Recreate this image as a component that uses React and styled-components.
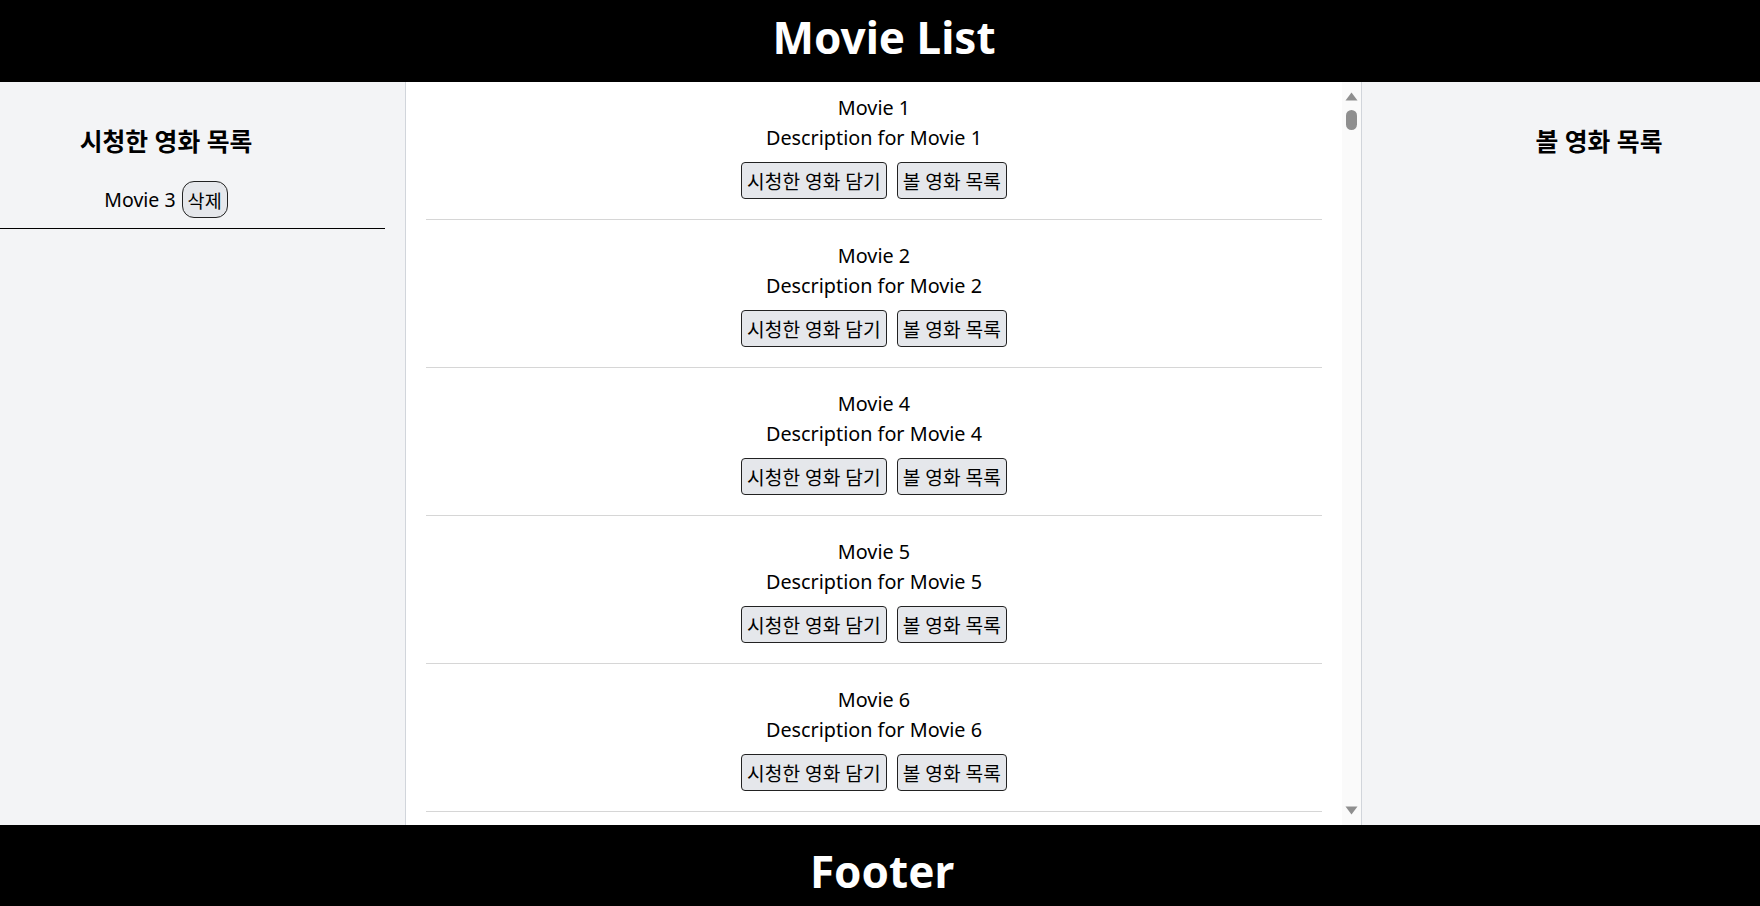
import { useState } from "react";
import styled, { createGlobalStyle } from "styled-components";

const GlobalStyle = createGlobalStyle`
  html, body {
    margin: 0;
    padding: 0;
    font-family: "Noto Sans", "Noto Sans CJK KR", sans-serif;
    color: #000;
    background: #fff;
  }
  * {
    box-sizing: border-box;
  }
`;

const Page = styled.div`
  display: flex;
  flex-direction: column;
  height: 100vh;
  overflow: hidden;
`;

const Header = styled.header`
  flex: 0 0 82px;
  background: #000;
  color: #fff;
  text-align: center;
  padding-bottom: 7px;
  padding-left: 8px;
`;

const Footer = styled.footer`
  flex: 0 0 81px;
  background: #000;
  color: #fff;
  text-align: center;
  padding-top: 11px;
  padding-left: 4px;
`;

const BigTitle = styled.h1`
  margin: 0;
  font-size: 44px;
  font-weight: 700;
  line-height: ${(props) => props.$lh || 75}px;
`;

const Main = styled.main`
  flex: 1;
  display: flex;
  min-height: 0;
`;

const Sidebar = styled.aside`
  flex: 0 0 ${(props) => props.$width}px;
  background: #f3f4f6;
  padding-top: 44px;
  ${(props) =>
    props.$side === "left"
      ? "border-right: 1px solid #d1d5db; padding-right: 20px;"
      : "border-left: 1px solid #d1d5db; padding-left: 76px;"}
`;

const SideTitle = styled.h2`
  margin: 0;
  font-size: 24.8px;
  font-weight: 700;
  line-height: 30px;
  text-align: center;
  padding-right: ${(props) => props.$inset || 0}px;
`;

const WatchedList = styled.ul`
  list-style: none;
  margin: 25px 0 0;
  padding: 0;
`;

const WatchedItem = styled.li`
  display: flex;
  align-items: center;
  justify-content: center;
  gap: 6px;
  padding: 0 53px 10px 0;
  border-bottom: 1px solid #000;
  font-size: 19.5px;
`;

const Middle = styled.div`
  flex: 1;
  display: flex;
  min-width: 0;
`;

const MovieScroller = styled.section`
  flex: 1;
  overflow-y: auto;
  padding: 0 20px;
  scrollbar-width: none;
  &::-webkit-scrollbar {
    display: none;
  }
`;

const Track = styled.div`
  flex: 0 0 19px;
  display: flex;
  flex-direction: column;
  align-items: center;
  background: #fafafa;
  padding: 10px 0 10px;
`;

const Thumb = styled.div`
  width: 11px;
  height: 20px;
  margin-top: 9px;
  border-radius: 6px;
  background: #8f8f8f;
`;

const TrackSpace = styled.div`
  flex: 1;
`;

const MovieItem = styled.div`
  padding: 11px 0 20px;
  margin-bottom: 10px;
  border-bottom: 1px solid #d6d6d6;
  text-align: center;
`;

const MovieLine = styled.div`
  font-size: 19.8px;
  line-height: 30px;
`;

const ButtonRow = styled.div`
  display: flex;
  justify-content: center;
  gap: 10px;
  margin-top: 9px;
`;

const ActionButton = styled.button`
  height: 37px;
  padding: 0 5px;
  font-family: inherit;
  font-size: ${(props) => props.$size || 19.2}px;
  color: #000;
  background: #e5e7eb;
  border: 1px solid #222;
  border-radius: ${(props) => props.$radius || 4}px;
  cursor: pointer;
`;

const Arrow = ({ down }) => (
  <svg width="13" height="9" viewBox="0 0 13 9">
    <path d={down ? "M0.5 0.5 H12.5 L6.5 8.5 Z" : "M6.5 0.5 L12.5 8.5 H0.5 Z"} fill="#8f8f8f" />
  </svg>
);

const allMovies = Array.from({ length: 200 }, (_, i) => ({
  id: i + 1,
  title: `Movie ${i + 1}`,
  description: `Description for Movie ${i + 1}`,
}));

export default function App() {
  const [watched, setWatched] = useState([3]);
  const [toWatch, setToWatch] = useState([]);

  const taken = new Set([...watched, ...toWatch]);
  const list = allMovies.filter((m) => !taken.has(m.id));
  const byId = (id) => allMovies.find((m) => m.id === id);

  return (
    <>
      <GlobalStyle />
      <Page>
        <Header>
          <BigTitle>Movie List</BigTitle>
        </Header>
        <Main>
          <Sidebar $side="left" $width={406}>
            <SideTitle $inset={53}>시청한 영화 목록</SideTitle>
            <WatchedList>
              {watched.map((id) => (
                <WatchedItem key={id}>
                  <span>{byId(id).title}</span>
                  <ActionButton
                    $size={18.5}
                    $radius={12}
                    onClick={() => setWatched((w) => w.filter((x) => x !== id))}
                  >
                    삭제
                  </ActionButton>
                </WatchedItem>
              ))}
            </WatchedList>
          </Sidebar>

          <Middle>
            <MovieScroller>
              {list.map((movie) => (
                <MovieItem key={movie.id}>
                  <MovieLine>{movie.title}</MovieLine>
                  <MovieLine>{movie.description}</MovieLine>
                  <ButtonRow>
                    <ActionButton onClick={() => setWatched((w) => [...w, movie.id])}>
                      시청한 영화 담기
                    </ActionButton>
                    <ActionButton onClick={() => setToWatch((t) => [...t, movie.id])}>
                      볼 영화 목록
                    </ActionButton>
                  </ButtonRow>
                </MovieItem>
              ))}
            </MovieScroller>
            <Track>
              <Arrow />
              <Thumb />
              <TrackSpace />
              <Arrow down />
            </Track>
          </Middle>

          <Sidebar $side="right" $width={399}>
            <SideTitle>볼 영화 목록</SideTitle>
            <WatchedList>
              {toWatch.map((id) => (
                <WatchedItem key={id}>
                  <span>{byId(id).title}</span>
                  <ActionButton
                    $size={18.5}
                    $radius={12}
                    onClick={() => setToWatch((t) => t.filter((x) => x !== id))}
                  >
                    삭제
                  </ActionButton>
                </WatchedItem>
              ))}
            </WatchedList>
          </Sidebar>
        </Main>
        <Footer>
          <BigTitle $lh={70}>Footer</BigTitle>
        </Footer>
      </Page>
    </>
  );
}
